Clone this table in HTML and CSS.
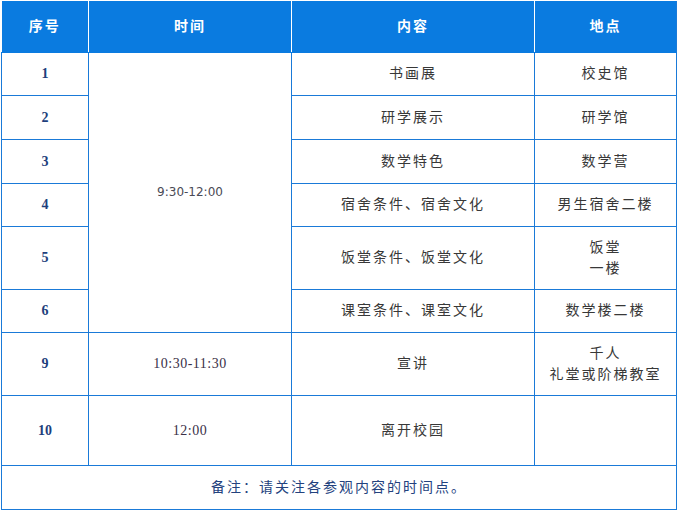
FILE: index.html
```html
<!DOCTYPE html>
<html lang="zh">
<head>
<meta charset="utf-8">
<link rel="stylesheet" href="styles.css">
</head>
<body>
<div class="wrap">
<table class="schedule">
  <colgroup>
    <col class="c1"><col class="c2"><col class="c3"><col class="c4">
  </colgroup>
  <thead>
    <tr class="h-head">
      <th>序号</th><th>时间</th><th>内容</th><th>地点</th>
    </tr>
  </thead>
  <tbody>
    <tr class="h43">
      <td class="num">1</td>
      <td class="time-sans" rowspan="6">9:30-12:00</td>
      <td>书画展</td><td>校史馆</td>
    </tr>
    <tr class="h44"><td class="num">2</td><td>研学展示</td><td>研学馆</td></tr>
    <tr class="h44"><td class="num">3</td><td>数学特色</td><td>数学营</td></tr>
    <tr class="h43"><td class="num">4</td><td>宿舍条件、宿舍文化</td><td>男生宿舍二楼</td></tr>
    <tr class="h63"><td class="num">5</td><td>饭堂条件、饭堂文化</td><td>饭堂<br>一楼</td></tr>
    <tr class="h43"><td class="num">6</td><td>课室条件、课室文化</td><td>数学楼二楼</td></tr>
    <tr class="h63">
      <td class="num">9</td><td class="time-serif">10:30-11:30</td><td>宣讲</td><td>千人<br>礼堂或阶梯教室</td>
    </tr>
    <tr class="h70">
      <td class="num">10</td><td class="time-serif">12:00</td><td>离开校园</td><td></td>
    </tr>
    <tr class="h44">
      <td class="note" colspan="4">备注：请关注各参观内容的时间点。</td>
    </tr>
  </tbody>
</table>
</div>
</body>
</html>
```

FILE: styles.css
```css
html, body {
  margin: 0;
  padding: 0;
  background: #ffffff;
}
.wrap {
  padding: 1px 0 0 1px;
}
.schedule {
  border-collapse: collapse;
  table-layout: fixed;
  width: 676px;
  font-family: "Noto Sans CJK SC", "Noto Sans", sans-serif;
  font-size: 14px;
  color: #383838;
}
.c1 { width: 87px; }
.c2 { width: 203px; }
.c3 { width: 243px; }
.c4 { width: 142px; }

.schedule th {
  background: #0a7be0;
  color: #ffffff;
  font-weight: bold;
  letter-spacing: 2px;
  border: 1px solid #ffffff;
  border-top: 0;
  border-bottom: 1px solid #0a7be0;
  padding: 0 0 2px 0;
  text-align: center;
  vertical-align: middle;
}
.schedule th:first-child { border-left: 0; }
.schedule th:last-child { border-right: 1px solid #1a7ad8; }
.schedule td {
  border: 1px solid #1a7ad8;
  padding: 0 0 2px 0;
  text-align: center;
  vertical-align: middle;
  letter-spacing: 2px;
  line-height: 21px;
}
.h-head { height: 51px; }
.h43 { height: 43px; }
.h44 { height: 44px; }
.h63 { height: 63px; }
.h70 { height: 70px; }

.schedule td.num {
  font-family: "Liberation Serif", "Times New Roman", serif;
  font-weight: bold;
  font-size: 14px;
  letter-spacing: 0;
  color: #1e3f7c;
  padding: 0;
}
.schedule td.time-sans {
  font-family: "DejaVu Sans", sans-serif;
  font-size: 12px;
  letter-spacing: 0;
  color: #4a4a55;
  padding: 0;
}
.schedule td.time-serif {
  font-family: "Liberation Serif", "Times New Roman", serif;
  font-size: 14px;
  letter-spacing: 0.5px;
  color: #3a3048;
  padding: 0;
}
.schedule td.note {
  color: #23427e;
}
```
